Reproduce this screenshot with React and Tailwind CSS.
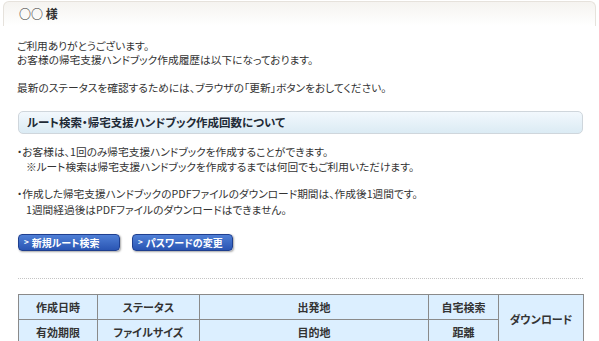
import React from "react";

function Btn({ children }) {
  return (
    <div className="h-[17px] rounded-[4px] bg-gradient-to-b from-[#4f7fd6] to-[#2a55b3] border border-[#1f3f8f] shadow-[1px_1px_2px_rgba(0,0,0,0.35)] flex items-center pl-[5px] text-white text-[10px] font-bold leading-none">
      <span className="text-[8px] mr-[3px] mt-[-1px]">&gt;</span>
      {children}
    </div>
  );
}

export default function App() {
  const th = "border border-[#8a8a8a] bg-[#dcefff] text-center font-bold text-[11px] text-[#333]";
  return (
    <div className="w-[599px] h-[341px] overflow-hidden bg-white text-[#333] font-['Noto_Sans_CJK_JP',sans-serif] [font-feature-settings:'palt']">
      <div className="mx-[3px] mt-[1px] h-[25px] rounded-t-[6px] border border-b-0 border-[#e6e2dc] bg-gradient-to-b from-[#f5f3f0] to-white pl-[15px] flex items-center">
        <span className="text-[12px] font-bold text-[#333] leading-none">○○ 様</span>
      </div>

      <div className="pl-[17px] mt-[13px] text-[10.7px] leading-[14px]">
        <p>ご利用ありがとうございます。</p>
        <p>お客様の帰宅支援ハンドブック作成履歴は以下になっております。</p>
        <p className="mt-[14px]">最新のステータスを確認するためには、ブラウザの「更新」ボタンをおしてください。</p>
      </div>

      <div className="ml-[18px] w-[565px] mt-[16px] h-[23px] rounded-[5px] border border-[#cfd6dc] bg-gradient-to-b from-[#f2f8fd] to-[#dbebf4] flex items-center pl-[8px]">
        <span className="text-[11.5px] font-bold text-[#1e2a36] leading-none">ルート検索・帰宅支援ハンドブック作成回数について</span>
      </div>

      <div className="pl-[17px] mt-[10px] text-[10.7px] leading-[15px]">
        <p>・お客様は、1回のみ帰宅支援ハンドブックを作成することができます。</p>
        <p className="pl-[9px]">※ルート検索は帰宅支援ハンドブックを作成するまでは何回でもご利用いただけます。</p>
        <p className="mt-[12px]">・作成した帰宅支援ハンドブックのPDFファイルのダウンロード期間は、作成後1週間です。</p>
        <p className="pl-[9px] mt-[1px]">1週間経過後はPDFファイルのダウンロードはできません。</p>
      </div>

      <div className="flex gap-[12px] ml-[18px] mt-[17px]">
        <div className="w-[102px]"><Btn>新規ルート検索</Btn></div>
        <div className="w-[101px]"><Btn>パスワードの変更</Btn></div>
      </div>

      <div className="ml-[18px] w-[565px] mt-[27px] border-t border-dotted border-[#c4c4c4]"></div>

      <table className="ml-[18px] mt-[15px] border-collapse w-[565px] table-fixed">
        <colgroup>
          <col className="w-[79px]" />
          <col className="w-[102px]" />
          <col className="w-[229px]" />
          <col className="w-[70px]" />
          <col className="w-[85px]" />
        </colgroup>
        <tbody>
          <tr className="h-[25px]">
            <td className={th}>作成日時</td>
            <td className={th}>ステータス</td>
            <td className={th}>出発地</td>
            <td className={th}>自宅検索</td>
            <td className={th} rowSpan={2}>ダウンロード</td>
          </tr>
          <tr className="h-[25px]">
            <td className={th}>有効期限</td>
            <td className={th}>ファイルサイズ</td>
            <td className={th}>目的地</td>
            <td className={th}>距離</td>
          </tr>
        </tbody>
      </table>
    </div>
  );
}
